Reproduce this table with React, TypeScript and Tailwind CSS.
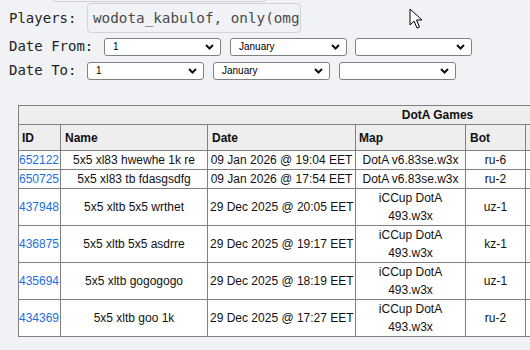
import React from 'react';

type Game = {
  id: string;
  name: string;
  date: string;
  map: string;
  bot: string;
};

const games: Game[] = [
  { id: '652122', name: '5x5 xl83 hwewhe 1k re', date: '09 Jan 2026 @ 19:04 EET', map: 'DotA v6.83se.w3x', bot: 'ru-6' },
  { id: '650725', name: '5x5 xl83 tb fdasgsdfg', date: '09 Jan 2026 @ 17:54 EET', map: 'DotA v6.83se.w3x', bot: 'ru-2' },
  { id: '437948', name: '5x5 xltb 5x5 wrthet', date: '29 Dec 2025 @ 20:05 EET', map: 'iCCup DotA 493.w3x', bot: 'uz-1' },
  { id: '436875', name: '5x5 xltb 5x5 asdrre', date: '29 Dec 2025 @ 19:17 EET', map: 'iCCup DotA 493.w3x', bot: 'kz-1' },
  { id: '435694', name: '5x5 xltb gogogogo', date: '29 Dec 2025 @ 18:19 EET', map: 'iCCup DotA 493.w3x', bot: 'uz-1' },
  { id: '434369', name: '5x5 xltb goo 1k', date: '29 Dec 2025 @ 17:27 EET', map: 'iCCup DotA 493.w3x', bot: 'ru-2' },
];

function Chevron() {
  return (
    <svg width="9" height="6" viewBox="0 0 9 6" className="absolute right-[7px] top-[6px] pointer-events-none">
      <path d="M1 1 L4.5 4.5 L8 1" fill="none" stroke="#111" strokeWidth="2" />
    </svg>
  );
}

function Select({ value, className }: { value: string; className?: string }) {
  return (
    <div className={`relative h-[18px] w-[117px] ${className ?? ''}`}>
      <div className="h-full w-full rounded-[3px] border border-[#808080] bg-white pl-[8px] font-['Liberation_Sans',sans-serif] text-[10px] leading-[16px] text-black">
        {value}
      </div>
      <Chevron />
    </div>
  );
}

function Cursor() {
  return (
    <svg width="16" height="22" viewBox="0 0 16 22" className="absolute left-[409px] top-[8px]">
      <path d="M1 1 L1 17 L5 13 L8 20 L10.5 19 L7.5 12 L13 12 Z" fill="#fff" stroke="#000" strokeWidth="1" strokeLinejoin="round" />
    </svg>
  );
}

export default function App() {
  return (
    <div className="relative h-[350px] w-[530px] overflow-hidden bg-[#f1f2f6] text-[#222]">
      <div className="absolute left-[52px] top-[-20px] h-[22px] w-[215px] rounded-[4px] border border-[#cfd0d4]" />
      <Cursor />

      <div className="flex flex-col pl-[9px] pt-[3px] font-['DejaVu_Sans_Mono',monospace] text-[14px] text-[#222]">
        <div className="flex items-center">
          <span className="w-[78px]">Players:</span>
          <div className="h-[30px] w-[214px] overflow-hidden whitespace-nowrap rounded-[4px] border border-[#d2d3d8] bg-[#f1f2f6] pl-[5px] text-[14.3px] leading-[28px] text-[#4a4a4a]">
            wodota_kabulof, only(omg
          </div>
        </div>
        <div className="mt-[3px] flex items-center">
          <span className="w-[95px]">Date From:</span>
          <Select value="1" />
          <Select value="January" className="ml-[9px]" />
          <Select value="" className="ml-[8px]" />
        </div>
        <div className="mt-[3px] flex items-center">
          <span className="w-[78px]">Date To:</span>
          <Select value="1" />
          <Select value="January" className="ml-[9px]" />
          <Select value="" className="ml-[9px]" />
        </div>
      </div>

      <table className="ml-[18px] mt-[24px] w-[838px] table-fixed border-collapse font-['Liberation_Sans',Arial,sans-serif] text-[12px] leading-[18px] text-[#111]">
        <colgroup>
          <col className="w-[42px]" />
          <col className="w-[147px]" />
          <col className="w-[148px]" />
          <col className="w-[110px]" />
          <col className="w-[60px]" />
          <col className="w-[331px]" />
        </colgroup>
        <thead>
          <tr className="h-[19px] bg-[#eeeeee]">
            <th colSpan={6} className="border border-[#808080] p-0 text-center font-bold">
              DotA Games
            </th>
          </tr>
          <tr className="h-[26px] bg-[#eeeeee]">
            <th className="border border-[#808080] px-[3px] text-left font-bold">ID</th>
            <th className="border border-[#808080] px-[4px] text-left font-bold">Name</th>
            <th className="border border-[#808080] px-[4px] text-left font-bold">Date</th>
            <th className="border border-[#808080] px-[3px] text-left font-bold">Map</th>
            <th className="border border-[#808080] px-[4px] text-left font-bold">Bot</th>
            <th className="border border-[#808080] px-[4px] text-left font-bold">Rating</th>
          </tr>
        </thead>
        <tbody>
          {games.map((g) => (
            <tr key={g.id} className="bg-white">
              <td className="border border-[#808080] p-0 text-left">
                <a className="text-[#1a6fe0]">{g.id}</a>
              </td>
              <td className="border border-[#808080] px-[2px] py-0 text-center">{g.name}</td>
              <td className="border border-[#808080] px-[2px] py-0 text-center whitespace-nowrap">{g.date}</td>
              <td className="border border-[#808080] px-[6px] py-0 text-center">{g.map}</td>
              <td className="border border-[#808080] px-[2px] py-0 text-center">{g.bot}</td>
              <td className="border border-[#808080] px-[3px] py-0 text-left text-[10px] text-[#f5c518]">★★★★☆</td>
            </tr>
          ))}
        </tbody>
      </table>
    </div>
  );
}
